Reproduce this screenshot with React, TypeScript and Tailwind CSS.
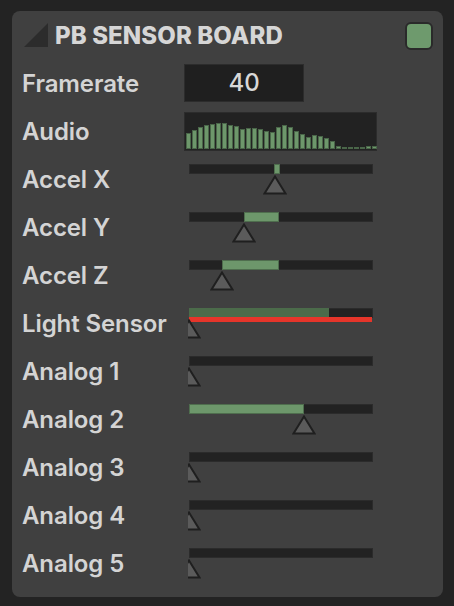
import React from 'react';

type SliderRow = {
  label: string;
  fill?: [number, number];
  thumb: number;
  dim?: boolean;
  alert?: boolean;
};

const audioLevels = [
  16, 19, 22, 24, 24.5, 25.5, 25.5, 24, 23, 20, 20.5, 20.5, 20, 18, 17, 22,
  24, 22, 18, 15, 12, 14, 13, 10.5, 8, 3, 1, 1, 1, 2, 3, 3,
];

const sliders: SliderRow[] = [
  { label: 'Accel X', fill: [86, 92], thumb: 87 },
  { label: 'Accel Y', fill: [56, 91], thumb: 56 },
  { label: 'Accel Z', fill: [34, 91], thumb: 34 },
  { label: 'Light Sensor', fill: [1, 141], thumb: 1, dim: true, alert: true },
  { label: 'Analog 1', thumb: 1 },
  { label: 'Analog 2', fill: [1, 116], thumb: 116 },
  { label: 'Analog 3', thumb: 1 },
  { label: 'Analog 4', thumb: 1 },
  { label: 'Analog 5', thumb: 1 },
];

const Thumb = ({ x }: { x: number }) => (
  <svg
    width="24"
    height="20"
    viewBox="0 0 24 20"
    className="absolute top-[11px]"
    style={{ left: x - 12 }}
  >
    <polygon points="12,1.5 22.5,18.5 1.5,18.5" fill="#5b5b5b" stroke="#1f1f1f" strokeWidth="2" strokeLinejoin="miter" />
  </svg>
);

const Slider = ({ row }: { row: SliderRow }) => (
  <div className="relative ml-[4px] h-[32px] w-[186px] translate-y-px overflow-hidden">
    <div className="relative mx-px h-[10px] border border-[#2b2b2b] bg-[#222222]">
      {row.fill && (
        <div
          className={`absolute -top-px -bottom-px ${row.dim ? 'bg-[#4b6b4a]' : 'bg-[#6d976b] border border-[#4f6e4e]'}`}
          style={{ left: row.fill[0] - 2, width: row.fill[1] - row.fill[0] }}
        />
      )}
    </div>
    {row.alert && <div className="absolute left-px top-[9px] h-[5px] w-[183px] bg-[#e5352a]" />}
    <Thumb x={row.thumb} />
  </div>
);

const label = 'w-[162px] translate-y-px text-[24px] leading-none font-semibold tracking-[-0.1px] text-[#d4d4d4]';

export default function App() {
  return (
    <div className="min-h-[606px] w-[454px] bg-[#232323] pt-[11px] font-['Inter',sans-serif]">
      <div className="mx-[12px] w-[431px] rounded-[8px] bg-[#404040] pb-[10px] pl-[10px] pr-[10px]">
        {/* header */}
        <div className="flex h-12 items-center">
          <svg width="24" height="24" viewBox="0 0 24 24" className="ml-[2px] shrink-0">
            <polygon points="24,0 24,24 0,24" fill="#2c2c2c" />
          </svg>
          <h1 className="ml-[7px] translate-y-px text-[24px] leading-none font-extrabold tracking-[0.1px] text-[#d6d6d6]">PB SENSOR BOARD</h1>
          <div className="ml-auto mr-0 mt-px h-[28px] w-[28px] rounded-[6px] border-2 border-[#2a2a2a] bg-[#6e9a6d]" />
        </div>

        {/* framerate */}
        <div className="flex h-12 items-center">
          <span className={label}>Framerate</span>
          <div className="flex h-[38px] w-[120px] items-center justify-center border border-[#2c2c2c] bg-[#1f1f1f] text-[24px] font-medium text-[#d8d8d8]">
            40
          </div>
        </div>

        {/* audio */}
        <div className="flex h-12 items-center">
          <span className={label}>Audio</span>
          <div className="flex h-[39px] w-[193px] items-end border border-[#2c2c2c] bg-[#222222] pb-px pl-px">
            {audioLevels.map((h, i) => (
              <div
                key={i}
                className="mr-px w-[5px] shrink-0 border border-[#4a6649] bg-[#6d976b]"
                style={{ height: Math.max(2, Math.round(h)) }}
              />
            ))}
          </div>
        </div>

        {sliders.map((row) => (
          <div key={row.label} className="flex h-12 items-center">
            <span className={label}>{row.label}</span>
            <Slider row={row} />
          </div>
        ))}
      </div>
    </div>
  );
}
